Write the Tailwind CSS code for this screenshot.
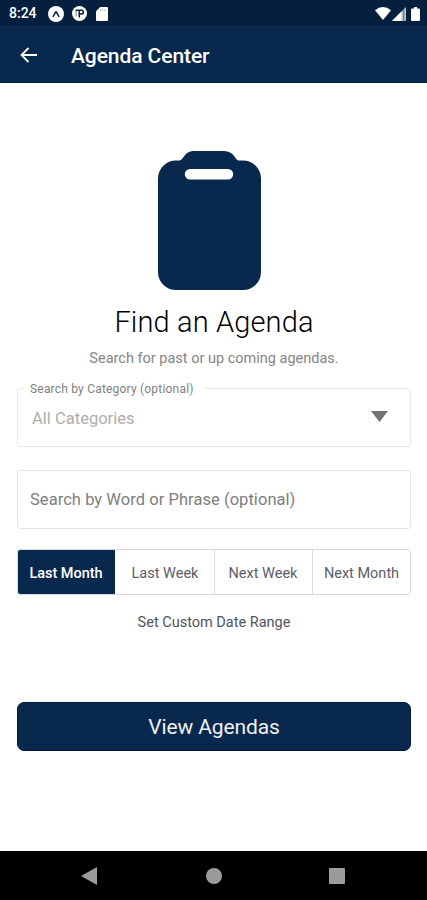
<!DOCTYPE html>
<html lang="en">
<head>
<meta charset="utf-8">
<title>Agenda Center</title>
<script src="https://cdn.jsdelivr.net/npm/@tailwindcss/browser@4"></script>
</head>
<body class="bg-white">
<div class="flex h-[900px] w-[427px] flex-col overflow-hidden bg-white font-['Roboto',sans-serif] whitespace-nowrap">
  <div class="flex h-[25px] shrink-0 items-center bg-[#05203f] pt-[2px] pl-[9px] text-white">
    <span class="w-[39px] text-[14px] font-medium">8:24</span>
    <svg class="size-4" viewBox="0 0 16 16"><circle cx="8" cy="8" r="8" fill="#fff"/><path d="M5.200 10.500 7.700 5.800h.6l2.500 4.700" fill="none" stroke="#05203f" stroke-width="1.500" stroke-linecap="round" stroke-linejoin="round"/></svg>
    <svg class="ml-2 size-[15px]" viewBox="0 0 15 15"><circle cx="7.500" cy="7.500" r="7.500" fill="#fff"/><path d="M3.500 4.200h6a1.900 1.900 0 0 1 0 3.800H7.500M7.300 4v7.500" fill="none" stroke="#05203f" stroke-width="1.500"/><path d="M4.200 4.500v6" stroke="#8a99aa" stroke-width="1.200"/></svg>
    <svg class="ml-[9px] h-[14px] w-3" viewBox="0 0 12 14"><path d="M4.200 0H11a1 1 0 0 1 1 1v12a1 1 0 0 1-1 1H1a1 1 0 0 1-1-1V4.200Z" fill="#fff"/><path d="M4.500 2v2M6.700 2v2M8.900 2v2" stroke="#b5bec8" stroke-width="1"/></svg>
    <svg class="ml-auto h-[13px] w-4" viewBox="0 0 16 13"><path d="M0 3.200Q8-3 16 3.200L8 13Z" fill="#fff"/></svg>
    <svg class="ml-px h-[14px] w-[14px]" viewBox="0 0 14 14"><path d="M14 0v14H0Z" fill="#b9c0c9"/><path d="M9.500 4.500V14H0Z" fill="#fff"/><path d="M11.700 2.300V14" stroke="#626f80" stroke-width="1"/></svg>
    <svg class="mr-[7px] ml-[5px] h-[14px] w-[9px]" viewBox="0 0 9 14"><path d="M3 0h3v1.500h2a1 1 0 0 1 1 1V13a1 1 0 0 1-1 1H1a1 1 0 0 1-1-1V2.500a1 1 0 0 1 1-1h2Z" fill="#fff"/></svg>
  </div>
  <header class="flex h-[58px] shrink-0 items-center border-b border-[#02183a] bg-[#08284e] pl-5 text-white">
    <svg class="mt-[3px] h-[16px] w-[17px]" viewBox="0 0 17 16"><path d="M17 8H1.500M8.500 1 1.500 8l7 7" fill="none" stroke="#fff" stroke-width="1.800"/></svg>
    <h1 class="mt-[5px] ml-[34px] text-[21px] leading-6 font-medium tracking-[-0.080px]">Agenda Center</h1>
  </header>
  <main class="flex grow flex-col items-center pr-4 pl-[17px] pt-[68px]">
    <svg class="mr-[9px] h-[139px] w-[103px] shrink-0" viewBox="0 0 103 139"><path fill-rule="evenodd" d="M18 9.500h3.500C26 9 26 0 36 0h30c10 0 11 9 14.500 9.500H85a18 18 0 0 1 18 18V121a18 18 0 0 1-18 18H18a18 18 0 0 1-18-18V27.500a18 18 0 0 1 18-18ZM32 18a5 5 0 0 0 0 10.500h38a5 5 0 0 0 0-10.500Z" fill="#08284e"/></svg>
    <h2 class="mt-[14px] text-[29px] leading-[36px] font-light tracking-[0.130px] text-black">Find an Agenda</h2>
    <p class="mt-[9px] text-[14.500px] leading-5 text-[#858585]">Search for past or up coming agendas.</p>
    <fieldset class="mt-[9px] h-[69px] w-full shrink-0 rounded-[3px] border border-[#e9e9e9] pl-[5px]">
      <legend class="h-5 px-[7px] pr-[10px] text-[12px] leading-[22px] tracking-[0.200px] text-[#808080]">Search by Category (optional)</legend>
      <div class="flex h-10 items-center justify-between pr-[22px] pl-[9px]">
        <span class="pt-[2px] text-[16.500px] tracking-[0.020px] text-[#aeaeae]">All Categories</span>
        <svg class="mb-[4px] h-[11px] w-[17px]" viewBox="0 0 17 11"><path d="M0 0h17L8.500 11Z" fill="#737373"/></svg>
      </div>
    </fieldset>
    <div class="mt-[23px] flex h-[59px] w-full shrink-0 items-center rounded-[3px] border border-[#e5e5e5] pt-[2px] pl-3 text-[16.500px] tracking-[0.050px] text-[#7e7e7e]">Search by Word or Phrase (optional)</div>
    <div class="mt-5 grid h-[46px] w-full shrink-0 grid-cols-4 overflow-hidden rounded-[3px] border border-[#dcdce0] text-[14.500px] text-[#5a5e69]">
      <div class="-my-px mr-px -ml-px flex items-center justify-center bg-[#08284e] pt-[3px] font-medium tracking-[-0.050px] text-white">Last Month</div>
      <div class="flex items-center justify-center pt-[3px]">Last Week</div>
      <div class="flex items-center justify-center border-l border-[#dcdce0] pt-[3px] pr-px">Next Week</div>
      <div class="flex items-center justify-center border-l border-[#dcdce0] pt-[3px]">Next Month</div>
    </div>
    <div class="mt-[18px] text-[14.500px] leading-5 text-[#505461]">Set Custom Date Range</div>
    <button class="mt-[69px] h-[49px] w-full shrink-0 rounded-[7px] border border-[#02183a] bg-[#08284e] pt-[3px] text-[21px] tracking-[-0.100px] text-[#f0f0f0]">View Agendas</button>
  </main>
  <nav class="flex h-[49px] shrink-0 items-center justify-between bg-black pr-[82px] pl-[81px]">
    <svg class="h-[18px] w-4" viewBox="0 0 16 18"><path d="M16 0v18L0 9Z" fill="#9b9b9b"/></svg>
    <div class="ml-px size-4 rounded-full bg-[#9b9b9b]"></div>
    <div class="size-4 rounded-[1px] bg-[#9b9b9b]"></div>
  </nav>
</div>
</body>
</html>
